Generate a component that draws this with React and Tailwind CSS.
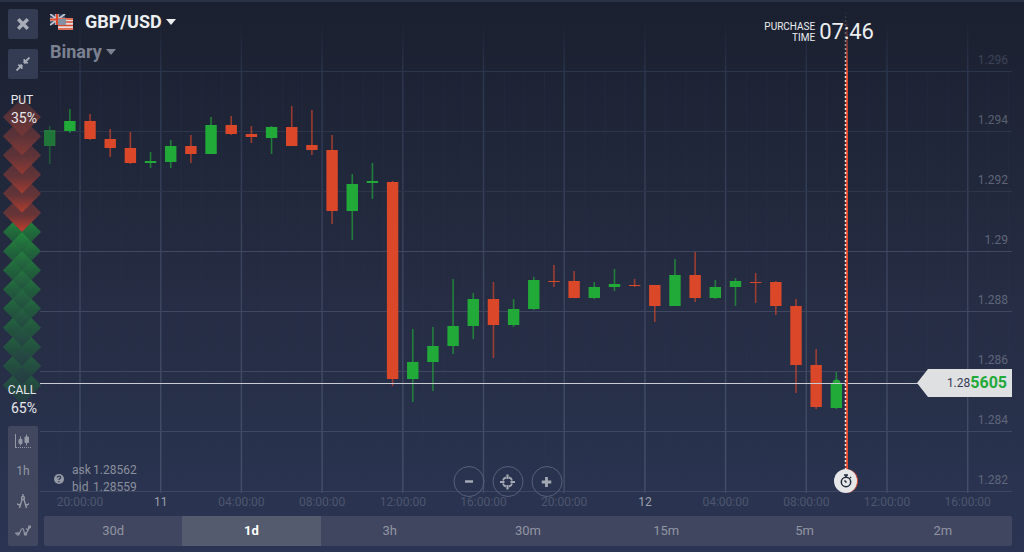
import { useState } from "react";

const PLOT_W = 968;
const PLOT_H = 491;
const FIRST_HOUR_X = 36;
const HOUR_STEP = 80.7;

const timeLabels = [
    { text: "20:00:00" },
    { text: "11", day: true },
    { text: "04:00:00" },
    { text: "08:00:00" },
    { text: "12:00:00" },
    { text: "16:00:00" },
    { text: "20:00:00" },
    { text: "12", day: true },
    { text: "04:00:00" },
    { text: "08:00:00" },
    { text: "12:00:00" },
    { text: "16:00:00" },
];

const prices = [
    { text: "1.296", y: 72, color: "text-[#3c4358]" },
    { text: "1.294", y: 132, color: "text-[#5a6072]" },
    { text: "1.292", y: 192, color: "text-[#5f6577]" },
    { text: "1.29", y: 252, color: "text-[#5f6577]" },
    { text: "1.288", y: 312, color: "text-[#5f6679]" },
    { text: "1.286", y: 372, color: "text-[#5f667b]" },
    { text: "1.284", y: 432, color: "text-[#5f667b]" },
    { text: "1.282", y: 492, color: "text-[#5f667b]" },
];

// [up, bodyTop, bodyBottom, high, low]
const candles = [
    [1, 130, 146, 126, 164],
    [1, 121, 131, 109, 133],
    [0, 121, 139, 114, 140],
    [0, 139, 148, 129, 157],
    [0, 148, 163, 132, 164],
    [1, 161, 163, 152, 168],
    [1, 146, 162, 140, 168],
    [0, 146, 154, 135, 163],
    [1, 125, 154, 117, 154],
    [0, 125, 134, 116, 135],
    [0, 134, 137, 126, 143],
    [1, 127, 138, 126, 154],
    [0, 127, 146, 106, 146],
    [0, 145, 150, 110, 155],
    [0, 150, 211, 135, 224],
    [1, 184, 211, 174, 240],
    [1, 181, 183, 163, 199],
    [0, 182, 379, 181, 386],
    [1, 362, 379, 329, 402],
    [1, 346, 362, 327, 391],
    [1, 326, 346, 279, 354],
    [1, 299, 326, 293, 339],
    [0, 299, 325, 282, 358],
    [1, 309, 325, 299, 327],
    [1, 280, 309, 277, 310],
    [0, 281, 282, 265, 287],
    [0, 281, 298, 271, 298],
    [1, 287, 298, 282, 299],
    [1, 284, 287, 269, 291],
    [0, 285, 286, 279, 287],
    [0, 285, 306, 285, 322],
    [1, 275, 306, 259, 306],
    [0, 275, 298, 252, 302],
    [1, 287, 298, 280, 299],
    [1, 281, 287, 278, 306],
    [0, 282, 283, 273, 303],
    [0, 282, 306, 281, 315],
    [0, 306, 365, 299, 393],
    [0, 365, 407, 349, 409],
    [1, 383, 408, 372, 409],
];

const periods = ["30d", "1d", "3h", "30m", "15m", "5m", "2m"];

function Caret({ className }) {
    return (
        <svg viewBox="0 0 10 6" className={className} fill="currentColor" aria-hidden="true">
            <path d="M0 0h10L5 6z" />
        </svg>
    );
}

function Flags() {
    return (
        <svg viewBox="0 0 23 17" className="h-[17px] w-[23px]" aria-hidden="true">
            <rect width="15" height="11" fill="#2f3d60" />
            <path d="M0 0l15 11M15 0L0 11" stroke="#c3c7d0" strokeWidth="1.8" />
            <path d="M7 0v11M0 5.5h15" stroke="#d5cfd2" strokeWidth="3.6" />
            <path d="M7 0v11M0 5.5h15" stroke="#dc4a2b" strokeWidth="2.2" />
            <rect x="8" y="4" width="15" height="12" fill="#e3dcdc" />
            <path d="M8 5h15M8 8h15M8 11.500h15M8 15h15" stroke="#dc4a2b" strokeWidth="1.5" />
            <rect x="8" y="5" width="8" height="6" fill="#8590a5" />
        </svg>
    );
}

// Strength gauge: put diamonds point down over each other, call diamonds point up
function Gauge() {
    const step = 19.15;
    const diamond = (cy) => `M20 ${cy - 19}L39 ${cy}L20 ${cy + 19}L1 ${cy}Z`;
    const greens = Array.from({ length: 9 }, (_, i) => 141 + step * i);
    const reds = Array.from({ length: 6 }, (_, i) => 26 + step * i);
    return (
        <svg viewBox="0 0 40 326" className="absolute inset-0 h-full w-full" aria-hidden="true">
            <defs>
                <linearGradient id="call" x1="0" y1="0" x2="0" y2="1">
                    <stop offset="0" stopColor="#23943c" />
                    <stop offset="0.55" stopColor="#20693a" />
                    <stop offset="1" stopColor="#1f5238" />
                </linearGradient>
                <linearGradient id="put" x1="0" y1="0" x2="0" y2="1">
                    <stop offset="0" stopColor="#563138" />
                    <stop offset="0.55" stopColor="#653437" />
                    <stop offset="1" stopColor="#c23f2d" />
                </linearGradient>
                <linearGradient id="putTop" x1="0" y1="0" x2="0" y2="1">
                    <stop offset="0" stopColor="#5c3338" stopOpacity="0.5" />
                    <stop offset="0.6" stopColor="#603438" />
                    <stop offset="1" stopColor="#6d3537" />
                </linearGradient>
                <linearGradient id="callShade" x1="0" y1="125" x2="0" y2="326" gradientUnits="userSpaceOnUse">
                    <stop offset="0" stopColor="#272e46" stopOpacity="0" />
                    <stop offset="1" stopColor="#272e46" stopOpacity="0.65" />
                </linearGradient>
            </defs>
            {greens.map((cy) => <path key={cy} d={diamond(cy)} fill="url(#call)" />)}
            {greens.map((cy) => <path key={cy} d={diamond(cy)} fill="url(#callShade)" />)}
            {[...reds].reverse().map((cy, i) => (
                <g key={cy}>
                    <path d={diamond(cy)} fill="url(#putTop)" />
                    <path d={diamond(cy)} fill="url(#put)" opacity={1 - i * 0.18} />
                </g>
            ))}
        </svg>
    );
}

function Sidebar() {
    return (
        <aside className="flex w-11 shrink-0 flex-col items-start pt-[9px] pl-2">
            <button aria-label="Close" className="flex h-[30px] w-[30px] items-center justify-center rounded-xs bg-[#343c53] text-[#a9adb8]">
                <svg viewBox="0 0 12 12" className="h-3 w-3" stroke="currentColor" strokeWidth="3.4">
                    <path d="M1.2 1.2l9.600 9.600M10.800 1.200l-9.600 9.600" />
                </svg>
            </button>
            <button aria-label="Collapse" className="mt-[10px] flex h-[30px] w-[30px] items-center justify-center rounded-xs bg-[#343c53] text-[#a9adb8]">
                <svg viewBox="0 0 14 14" className="h-[14px] w-[14px]" fill="currentColor" stroke="currentColor">
                    <path d="M8 6l5.5-5.5M6 8L0.5 13.5" strokeWidth="1.8" />
                    <path d="M8 2v4h4zM6 12V8H2z" strokeWidth="1" />
                </svg>
            </button>

            <div className="relative mt-3 -ml-[6px] flex w-10 flex-1 flex-col justify-between text-center text-[12px] leading-[18px] text-[#e6e8ec]">
                <Gauge />
                <div className="relative">
                    <p>PUT</p>
                    <p className="pl-1 text-[14px]">35%</p>
                </div>
                <div className="relative">
                    <p>CALL</p>
                    <p className="pl-1 text-[14px]">65%</p>
                </div>
            </div>

            <div className="mt-[9px] mb-[6px] flex h-[120px] w-[30px] flex-col rounded-xs bg-[#40475f] text-[12px] text-[#9498a5]">
                <button aria-label="Chart type" className="flex w-full flex-1 items-center justify-center">
                    <svg viewBox="0 0 16 15" className="h-[15px] w-4" fill="none" stroke="currentColor">
                        <path d="M0.5 0v14" />
                        <path d="M1 13.5h15" strokeDasharray="1 1" />
                        <path d="M5.5 2.500v9M11.500 0.500v11" />
                        <path d="M4 5.500h3v4H4zM10 3h3.500v5.500H10z" fill="currentColor" />
                    </svg>
                </button>
                <button className="flex-1">1h</button>
                <button aria-label="Drawing tools" className="flex w-full flex-1 items-center justify-center">
                    <svg viewBox="0 0 12 15" className="h-[15px] w-3" fill="none" stroke="currentColor" strokeWidth="1.4">
                        <path d="M6 0v3M5.200 5L2.500 14M6.800 5l2.700 9M0 9.500l1.500 1.200h2M12 9.500l-1.500 1.200h-2" />
                        <circle cx="6" cy="4" r="1.500" />
                    </svg>
                </button>
                <button aria-label="Indicators" className="flex w-full flex-1 items-center justify-center">
                    <svg viewBox="0 0 16 12" className="h-3 w-4" fill="none" stroke="currentColor" strokeWidth="1.2">
                        <path d="M0 8.500q2-1 3 0c2 1.500 2.500-5 4.500-5s1 6 3 5.500 2-5 4.500-7" />
                        <path d="M11 3.500l2.500 2" />
                        <circle cx="3" cy="9" r="1.200" />
                        <circle cx="10.500" cy="9" r="1.200" />
                        <circle cx="14.500" cy="1.800" r="1" />
                    </svg>
                </button>
            </div>
        </aside>
    );
}

function Plot() {
    return (
        <svg viewBox={`0 0 ${PLOT_W} ${PLOT_H}`} preserveAspectRatio="none" className="absolute inset-0 h-full w-full overflow-visible" aria-hidden="true">
            <defs>
                <linearGradient id="grid" x1="0" y1="20" x2="0" y2="491" gradientUnits="userSpaceOnUse">
                    <stop offset="0" stopColor="#2a354e" stopOpacity="0" />
                    <stop offset="0.12" stopColor="#2a354e" />
                    <stop offset="0.5" stopColor="#39435b" />
                    <stop offset="1" stopColor="#454f69" />
                </linearGradient>
                <linearGradient id="expiry" x1="0" y1="20" x2="0" y2="75" gradientUnits="userSpaceOnUse">
                    <stop offset="0" stopColor="#e5492a" stopOpacity="0" />
                    <stop offset="1" stopColor="#e5492a" />
                </linearGradient>
                <linearGradient id="dots" x1="0" y1="10" x2="0" y2="75" gradientUnits="userSpaceOnUse">
                    <stop offset="0" stopColor="#f0e4e2" stopOpacity="0" />
                    <stop offset="1" stopColor="#f0e4e2" />
                </linearGradient>
            </defs>

            {/* grid */}
            {Array.from({ length: 48 }, (_, i) => (
                <rect key={i} x={FIRST_HOUR_X - 20 + i * 20.17} y="72" width="1" height="419" fill="#2f3a55" opacity="0.22" />
            ))}
            {timeLabels.map((_, i) => (
                <rect key={i} x={FIRST_HOUR_X - 0.7 + i * HOUR_STEP} y="20" width="1.4" height="473" fill="url(#grid)" />
            ))}
            {prices.map((p) => (
                <rect key={p.text} x="-4" y={p.y - 1} width={PLOT_W + 4} height="1" fill={p.y < 250 ? "#2b364d" : "#3f4860"} />
            ))}

            {/* candles */}
            {candles.map(([up, top, bottom, high, low], i) => {
                const x = 5.7 + i * 20.17;
                const color = up ? "#22aa38" : "#db4729";
                return (
                    <g key={i} fill={color} opacity={i === 0 ? 0.6 : 1}>
                        <rect x={x - 0.8} y={high} width="1.6" height={low - high} opacity="0.65" />
                        <rect x={x - 5.7} y={top} width="11.4" height={bottom - top} />
                    </g>
                );
            })}
            <circle cx="792.5" cy="383.5" r="4" fill="#22aa38" />

            {/* current price and expiry */}
            <rect x="-4" y="383" width="878" height="1" fill="#c9cbd3" />
            <rect x="802" y="20" width="2" height="455" fill="url(#expiry)" />
            <rect x="801" y="75" width="1" height="400" fill="#e5492a" opacity="0.3" />
            <path d="M801.500 12v460M801.510 472" stroke="url(#dots)" strokeWidth="1.500" strokeDasharray="2 2" />
        </svg>
    );
}

function RoundButton({ label, children }) {
    return (
        <button aria-label={label} className="flex h-[31px] w-[31px] items-center justify-center rounded-full border border-[#59617a] text-[#a4a8b3]">
            {children}
        </button>
    );
}

export default function App() {
    const [period, setPeriod] = useState("1d");

    return (
        <main className="flex min-h-screen w-full bg-linear-to-b from-[#1a202f] via-[#252c42] to-[#2b3553] font-[Roboto,sans-serif] shadow-[inset_0_2px_0_#2a3346]">
            <Sidebar />

            <section className="mr-3 flex min-w-0 flex-1 flex-col">
                <div className="relative flex flex-1 flex-col justify-between">
                    <Plot />

                    <header className="relative pt-[10px] pl-[6px]">
                        <button className="flex h-6 items-center text-[18px] leading-6 font-bold text-[#eceef0]">
                            <Flags />
                            <span className="ml-3">GBP/USD</span>
                            <Caret className="ml-1 h-[6px] w-[10px]" />
                        </button>
                        <button className="mt-[6px] flex h-6 items-center text-[18px] leading-6 font-bold text-[#7b8190]">
                            Binary
                            <Caret className="ml-1 h-[6px] w-[10px]" />
                        </button>
                    </header>

                    <div
                        className="absolute top-5 flex -translate-x-full items-center gap-1 text-[#eceef0]"
                        style={{ left: `${(830 / PLOT_W) * 100}%` }}
                    >
                        <span className="text-right text-[10px] leading-[11px]">
                            PURCHASE
                            <br />
                            TIME
                        </span>
                        <time className="text-[22px] leading-6">07:46</time>
                    </div>

                    {prices.map((p) => (
                        <span
                            key={p.text}
                            className={`absolute right-1 -translate-y-5 text-[12px] leading-4 ${p.color}`}
                            style={{ top: `${(p.y / PLOT_H) * 100}%` }}
                        >
                            {p.text}
                        </span>
                    ))}

                    <div
                        className="absolute right-0 flex h-7 w-[95px] -translate-y-1/2 items-center justify-end bg-[#dfe0e2] pr-[5px] [clip-path:polygon(0_50%,11px_0,100%_0,100%_100%,11px_100%)]"
                        style={{ top: `${(383 / PLOT_H) * 100}%` }}
                    >
                        <span className="text-[12px] text-[#343c55]">1.28</span>
                        <span className="text-[16px] font-bold text-[#22aa38]">5605</span>
                    </div>

                    <div className="relative mb-[-5px] flex items-center pl-[10px] text-[12px] leading-[17px] text-[#8a8f9d]">
                        <svg viewBox="0 0 10 10" className="h-[10px] w-[10px]" aria-hidden="true">
                            <circle cx="5" cy="5" r="5" fill="#9599a6" />
                            <path d="M3.300 3.800q0-1.600 1.700-1.600t1.700 1.400q0 .8-1.700 1.700v.8M5 7v1.200" fill="none" stroke="#2b3450" strokeWidth="1.200" />
                        </svg>
                        <dl className="ml-2 grid grid-cols-[21px_auto]">
                            <dt>ask</dt>
                            <dd>1.28562</dd>
                            <dt>bid</dt>
                            <dd>1.28559</dd>
                        </dl>
                    </div>

                    <div
                        className="absolute bottom-[-6px] flex -translate-x-1/2 gap-2"
                        style={{ left: `${(463.5 / PLOT_W) * 100}%` }}
                    >
                        <RoundButton label="Zoom out">
                            <svg viewBox="0 0 9 9" className="h-[9px] w-[9px]" stroke="currentColor" strokeWidth="2.6">
                                <path d="M0.500 4.500h8" />
                            </svg>
                        </RoundButton>
                        <RoundButton label="Center">
                            <svg viewBox="0 0 16 16" className="h-4 w-4" fill="none" stroke="currentColor" strokeWidth="1.800">
                                <path d="M9.500 3.500q2.500.5 3 3M12.500 9.500q-.5 2.500-3 3M6.500 12.500q-2.500-.5-3-3M3.500 6.500q.5-2.500 3-3" />
                                <path d="M8 0.500v4.500M8 11v4.500M0.500 8H5M11 8h4.500" strokeWidth="2.200" />
                            </svg>
                        </RoundButton>
                        <RoundButton label="Zoom in">
                            <svg viewBox="0 0 10 10" className="h-[10px] w-[10px]" stroke="currentColor" strokeWidth="2.800">
                                <path d="M0 5h10M5 0v10" />
                            </svg>
                        </RoundButton>
                    </div>

                    <div
                        className="absolute bottom-[-2px] flex h-6 w-6 -translate-x-1/2 items-center justify-center rounded-full border-r border-[#db4729] bg-[#e6e7e9]"
                        style={{ left: `${(802 / PLOT_W) * 100}%` }}
                    >
                        <svg viewBox="0 0 12 14" className="h-[14px] w-3" fill="none" stroke="#1f273a" strokeWidth="1.500" aria-hidden="true">
                            <circle cx="6" cy="8" r="4.700" />
                            <path d="M4 1h4M6 1v2M10 3l1 1M6.500 8.500L4.500 6.500" />
                        </svg>
                    </div>
                </div>

                <div className="relative h-[25px] text-[12px] leading-[22px]">
                    {timeLabels.map((label, i) => (
                        <span
                            key={i}
                            className={`absolute -translate-x-1/2 ${label.day ? "text-[#9ba0ac]" : "text-[#4d566e]"}`}
                            style={{ left: `${((FIRST_HOUR_X + i * HOUR_STEP) / PLOT_W) * 100}%` }}
                        >
                            {label.text}
                        </span>
                    ))}
                </div>

                <nav className="mb-[6px] flex h-[30px] overflow-hidden rounded-xs bg-[#40465f] text-[13px] text-[#9195a3]">
                    {periods.map((p) => (
                        <button
                            key={p}
                            onClick={() => setPeriod(p)}
                            className={`flex-1 ${p === period ? "bg-[#555b6f] font-bold text-white" : ""}`}
                        >
                            {p}
                        </button>
                    ))}
                </nav>
            </section>
        </main>
    );
}
